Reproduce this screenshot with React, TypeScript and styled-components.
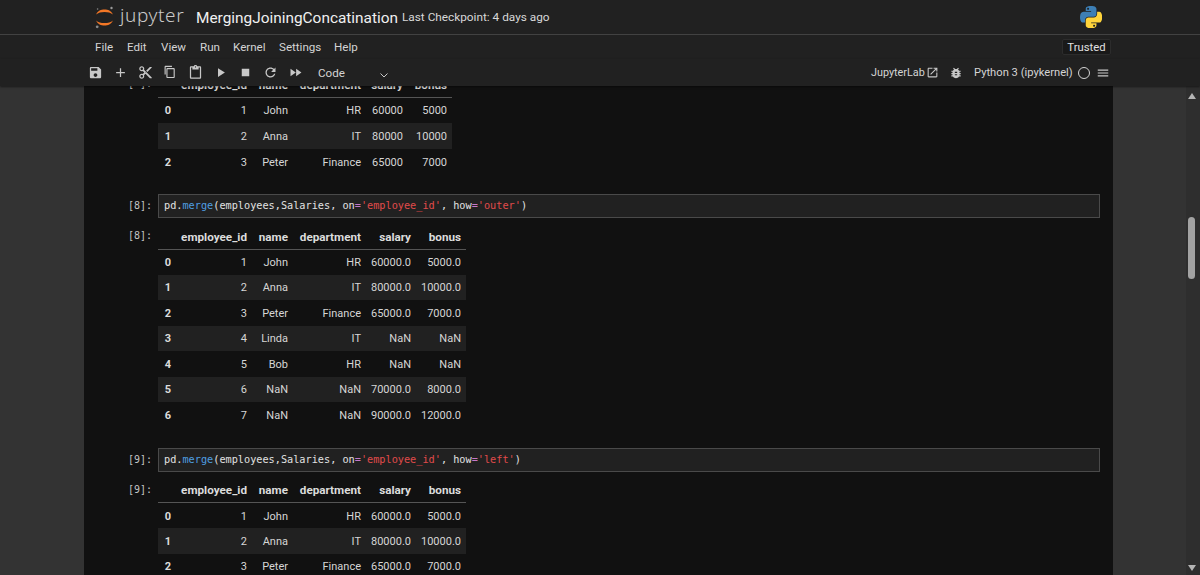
import React from 'react';
import styled, { createGlobalStyle } from 'styled-components';

const Global = createGlobalStyle`
  html, body { margin: 0; padding: 0; height: 100%; background: #333; overflow: hidden; }
  #root { height: 100%; }
`;
const uiFont = `Roboto, "Noto Sans", "Liberation Sans", sans-serif`;
const monoFont = `"DejaVu Sans Mono", "Liberation Mono", monospace`;

const Page = styled.div`
  width: 1200px; height: 575px; display: flex; flex-direction: column;
  overflow: hidden; font-family: ${uiFont}; color: #d8d8d8; position: relative;
`;
const Header = styled.header`
  height: 34px; flex: none; background: #212121; display: flex; align-items: center;
  padding: 0 0 0 95px; border-bottom: 1px solid #424242; box-sizing: content-box;
`;
const Wordmark = styled.span`
  font-family: "Noto Sans", sans-serif; font-weight: 300; font-size: 19px; letter-spacing: .6px;
  color: #c9c9c9; margin-left: 6px; width: 76px; line-height: 30px; margin-top: -4px;
`;
const Title = styled.span`
  font-size: 15.4px; color: #f0f0f0; width: 206px; white-space: nowrap; margin-top: 1px;
`;
const Checkpoint = styled.span`
  font-size: 11.8px; color: #d8d8d8; white-space: nowrap; flex: 1;
`;
const PyLogo = styled.svg`
  width: 22px; height: 22px; margin-right: 98px; margin-top: -1px;
`;
const MenuBar = styled.nav`
  height: 24px; flex: none; background: #212121; display: flex; align-items: center;
  padding-left: 95px;
`;
const MenuItem = styled.span<{ $w: number }>`
  font-size: 11.6px; color: #d4d4d4; width: ${p => p.$w}px;
`;
const Trusted = styled.span`
  margin-left: auto; margin-right: 89px; height: 16px; width: 49px; box-sizing: border-box;
  display: flex; align-items: center; justify-content: center; font-size: 11.3px;
  color: #e0e0e0; background: #191919; border: 1px solid #2c2c2c; border-radius: 2px;
`;
const ToolBar = styled.div`
  height: 27px; flex: none; background: #212121; display: flex; align-items: center;
  padding-left: 83px; box-shadow: 0 1px 2px rgba(0,0,0,.5); position: relative; z-index: 2;
`;
const ToolSlot = styled.span`
  width: 25px; height: 27px; flex: none; display: flex; align-items: center; justify-content: center;
`;
const Icon = styled.svg<{ $s?: number }>`
  width: ${p => p.$s ?? 15}px; height: ${p => p.$s ?? 15}px; fill: #c8c8c8; flex: none;
`;
const CellType = styled.span`
  font-size: 11.6px; color: #d4d4d4; margin-left: 10px; width: 60px;
`;
const Chevron = styled.svg`
  width: 12px; height: 12px; fill: none; stroke: #c8c8c8; stroke-width: 2; margin-top: 4px;
`;
const ToolRight = styled.div`
  margin-left: auto; margin-right: 90px; display: flex; align-items: center; font-size: 11.2px; color: #d4d4d4;
`;
const LabLabel = styled.span` width: 55px; white-space: nowrap; font-size: 10.8px; `;
const BugSlot = styled.span` margin-left: 10px; width: 25px; display: flex; `;
const KernelLabel = styled.span` width: 104px; white-space: nowrap; `;
const KernelDot = styled.span`
  width: 12px; height: 12px; border: 1px solid #d4d4d4; border-radius: 50%; margin-right: 6px; box-sizing: border-box;
`;
const Body = styled.main`
  flex: 1; min-height: 0; display: flex; background: #333; padding-left: 84px;
`;
const Notebook = styled.section`
  width: 1029px; flex: none; background: #111; overflow: hidden;
`;
const Scroller = styled.div`
  margin-top: -20px; padding-left: 46px; padding-right: 13px; display: flex; flex-direction: column;
`;
const Cell = styled.div`
  display: grid; grid-template-columns: 28px 1fr;
`;
const Prompt = styled.span`
  font-family: ${monoFont}; font-size: 10px; color: #c4c4c4; line-height: 24px; margin-left: -2px;
`;
const Input = styled.div`
  grid-column: 2; height: 24px; box-sizing: border-box; border: 1px solid #4a4a4a; background: #212121;
  padding-left: 5px; line-height: 22px; font-family: ${monoFont};
  font-size: 10.23px; color: #e2e2e2; white-space: pre;
`;
const Fn = styled.span` color: #4f9ee0; `;
const Op = styled.span` color: #c678c8; `;
const Str = styled.span` color: #e04b4b; `;
const OutputRow = styled(Cell)<{ $after?: number }>`
  margin-top: 6px; margin-bottom: ${p => p.$after ?? 20}px;
`;
const Frame = styled.table`
  border-collapse: collapse; table-layout: fixed; font-size: 11px; color: #d6d6d6;
`;
const HeadCell = styled.th`
  height: 25px; padding: 1px 5px 0; text-align: right; font-weight: 700; font-size: 11.7px; color: #dcdcdc;
  border-bottom: 1px solid #555; white-space: nowrap; box-sizing: border-box;
`;
const Row = styled.tr<{ $odd: boolean; $h: number }>`
  height: ${p => p.$h}px; background: ${p => (p.$odd ? '#212121' : 'transparent')};
`;
const IndexCell = styled.th<{ $nudge: number }>`
  padding: ${p => p.$nudge}px 5px 0; text-align: right; font-weight: 700; color: #dcdcdc; box-sizing: border-box;
`;
const DataCell = styled.td<{ $nudge: number }>`
  padding: ${p => p.$nudge}px 5px 0; text-align: right; white-space: nowrap; box-sizing: border-box;
`;
const ScrollTrack = styled.div`
  position: absolute; right: 0; top: 86px; bottom: 0; width: 14px; background: #2e2e2e;
`;
const Thumb = styled.div`
  position: absolute; left: 2px; top: 131px; width: 7px; height: 62px; border-radius: 4px; background: #a3a3a3;
`;
const ArrowUp = styled.div`
  position: absolute; left: 2px; top: 7px; width: 0; height: 0;
  border-left: 4px solid transparent; border-right: 4px solid transparent; border-bottom: 6px solid #b4b4b4;
`;
const ArrowDown = styled.div`
  position: absolute; left: 2px; bottom: 4px; width: 0; height: 0;
  border-left: 4px solid transparent; border-right: 4px solid transparent; border-top: 6px solid #b4b4b4;
`;

const P = {
  save: 'M17 3H5c-1.11 0-2 .9-2 2v14c0 1.1.89 2 2 2h14c1.1 0 2-.9 2-2V7l-4-4zm-5 16c-1.66 0-3-1.34-3-3s1.34-3 3-3 3 1.34 3 3-1.34 3-3 3zm3-10H5V5h10v4z',
  add: 'M19 13h-6v6h-2v-6H5v-2h6V5h2v6h6v2z',
  cut: 'M9.64 7.64c.23-.5.36-1.05.36-1.64 0-2.21-1.79-4-4-4S2 3.79 2 6s1.79 4 4 4c.59 0 1.14-.13 1.64-.36L10 12l-2.36 2.36C7.14 14.13 6.59 14 6 14c-2.21 0-4 1.79-4 4s1.79 4 4 4 4-1.79 4-4c0-.59-.13-1.14-.36-1.64L12 14l7 7h3v-1L9.64 7.64zM6 8c-1.1 0-2-.89-2-2s.9-2 2-2 2 .89 2 2-.9 2-2 2zm0 12c-1.1 0-2-.89-2-2s.9-2 2-2 2 .89 2 2-.9 2-2 2zm6-7.5c-.28 0-.5-.22-.5-.5s.22-.5.5-.5.5.22.5.5-.22.5-.5.5zM19 3l-6 6 2 2 7-7V3z',
  copy: 'M14.3 1.3H4.3c-1 0-1.8.8-1.8 1.8v12.2h1.8V3.1h10V1.3zM17 4.9H7.2c-1 0-1.8.8-1.8 1.8v12.4c0 1 .8 1.8 1.8 1.8H17c1 0 1.8-.8 1.8-1.8V6.7c0-1-.8-1.8-1.8-1.8zm0 14.2H7.2V6.7H17v12.4z',
  paste: 'M19 2h-4.18C14.4.84 13.3 0 12 0c-1.3 0-2.4.84-2.82 2H5c-1.1 0-2 .9-2 2v16c0 1.1.9 2 2 2h14c1.1 0 2-.9 2-2V4c0-1.1-.9-2-2-2zm-7 0c.55 0 1 .45 1 1s-.45 1-1 1-1-.45-1-1 .45-1 1-1zm7 18H5V4h2v3h10V4h2v16z',
  run: 'M8 5v14l11-7z',
  stop: 'M6 6h12v12H6z',
  restart: 'M17.65 6.35C16.2 4.9 14.21 4 12 4c-4.42 0-7.99 3.58-7.99 8s3.57 8 7.99 8c3.73 0 6.84-2.55 7.73-6h-2.08c-.82 2.33-3.04 4-5.65 4-3.31 0-6-2.69-6-6s2.69-6 6-6c1.66 0 3.14.69 4.22 1.78L13 11h7V4l-2.35 2.35z',
  ff: 'M4 18l8.5-6L4 6v12zm9-12v12l8.5-6L13 6z',
  launch: 'M19 19H5V5h7V3H5c-1.11 0-2 .9-2 2v14c0 1.1.89 2 2 2h14c1.1 0 2-.9 2-2v-7h-2v7zM14 3v2h3.59l-9.83 9.83 1.41 1.41L19 6.41V10h2V3h-7z',
  bug: 'M20 8h-2.81c-.45-.78-1.07-1.45-1.82-1.96L17 4.41 15.59 3l-2.17 2.17C12.96 5.06 12.49 5 12 5c-.49 0-.96.06-1.41.17L8.41 3 7 4.41l1.62 1.63C7.88 6.55 7.26 7.22 6.81 8H4v2h2.09c-.05.33-.09.66-.09 1v1H4v2h2v1c0 .34.04.67.09 1H4v2h2.81c1.04 1.79 2.97 3 5.19 3s4.15-1.21 5.19-3H20v-2h-2.09c.05-.33.09-.66.09-1v-1h2v-2h-2v-1c0-.34-.04-.67-.09-1H20V8zm-6 8h-4v-2h4v2zm0-4h-4v-2h4v2z',
  menu: 'M3 18h18v-2H3v2zm0-5h18v-2H3v2zm0-7v2h18V6H3z',
};
const Glyph = ({ d, s }: { d: string; s?: number }) => (
  <Icon $s={s} viewBox="0 0 24 24"><path d={d} /></Icon>
);

const JupyterMark = () => (
  <svg width="19" height="24" viewBox="0 0 19 24" style={{ flex: 'none' }}>
    <path d="M1 9.6C3 5.6 6 4.6 9.5 4.6S16 5.6 18 9.6C15.8 7.7 13 7 9.5 7S3.2 7.7 1 9.6z" fill="#f37726" />
    <path d="M1 15.4C3 19.4 6 20.4 9.5 20.4S16 19.4 18 15.4C15.8 17.3 13 18 9.5 18S3.2 17.3 1 15.4z" fill="#f37726" />
    <circle cx="16.5" cy="3" r="1.2" fill="#9a9a9a" />
    <circle cx="2.2" cy="21.8" r="1.4" fill="#8a8a8a" />
    <circle cx="2.6" cy="4" r=".8" fill="#8a8a8a" />
  </svg>
);

const menuItems: [string, number][] = [['File', 32], ['Edit', 34], ['View', 39], ['Run', 33], ['Kernel', 46], ['Settings', 55], ['Help', 40]];
const tools = [P.save, P.add, P.cut, P.copy, P.paste, P.run, P.stop, P.restart, P.ff];

type RowData = (string | number)[];
const intRows: RowData[] = [
  [1, 'John', 'HR', 60000, 5000],
  [2, 'Anna', 'IT', 80000, 10000],
  [3, 'Peter', 'Finance', 65000, 7000],
];
const outerRows: RowData[] = [
  [1, 'John', 'HR', '60000.0', '5000.0'],
  [2, 'Anna', 'IT', '80000.0', '10000.0'],
  [3, 'Peter', 'Finance', '65000.0', '7000.0'],
  [4, 'Linda', 'IT', 'NaN', 'NaN'],
  [5, 'Bob', 'HR', 'NaN', 'NaN'],
  [6, 'NaN', 'NaN', '70000.0', '8000.0'],
  [7, 'NaN', 'NaN', '90000.0', '12000.0'],
];
const heads = ['employee_id', 'name', 'department', 'salary', 'bonus'];
const wideCols = [18, 76, 41, 73, 50, 50];
const narrowCols = [18, 76, 41, 73, 42, 44];

const DataFrame = ({ rows, cols, rowH = 25.5, nudge = 1 }: { rows: RowData[]; cols: number[]; rowH?: number; nudge?: number }) => (
  <Frame style={{ width: cols.reduce((a, b) => a + b, 0) }}>
    <colgroup>{cols.map((w, i) => <col key={i} width={w} />)}</colgroup>
    <thead>
      <tr>
        <HeadCell />
        {heads.map(h => <HeadCell key={h}>{h}</HeadCell>)}
      </tr>
    </thead>
    <tbody>
      {rows.map((r, i) => (
        <Row key={i} $odd={i % 2 === 1} $h={rowH}>
          <IndexCell $nudge={nudge}>{i}</IndexCell>
          {r.map((v, j) => <DataCell key={j} $nudge={nudge}>{v}</DataCell>)}
        </Row>
      ))}
    </tbody>
  </Frame>
);

const Code = ({ how }: { how: string }) => (
  <Input>
    pd.<Fn>merge</Fn>(employees,Salaries, on<Op>=</Op><Str>'employee_id'</Str>, how<Op>=</Op><Str>'{how}'</Str>)
  </Input>
);

export default function App() {
  return (
    <Page>
      <Global />
      <Header>
        <JupyterMark />
        <Wordmark>jupyter</Wordmark>
        <Title>MergingJoiningConcatination</Title>
        <Checkpoint>Last Checkpoint: 4 days ago</Checkpoint>
        <PyLogo viewBox="0 0 110 110">
          <path fill="#3d7fb5" d="M54.919 0C50.335.021 45.958.412 42.106 1.094 30.76 3.098 28.7 7.295 28.7 15.032v10.219h26.813v3.406H18.638c-7.793 0-14.616 4.684-16.75 13.594-2.462 10.213-2.571 16.586 0 27.25 1.905 7.938 6.457 13.594 14.25 13.594h9.219V70.844c0-8.85 7.657-16.656 16.75-16.656h26.781c7.454 0 13.406-6.138 13.406-13.625V15.032c0-7.266-6.13-12.725-13.406-13.937C64.282.328 59.502-.02 54.919 0zM40.419 8.219c2.77 0 5.031 2.299 5.031 5.125 0 2.816-2.262 5.094-5.031 5.094-2.78 0-5.031-2.278-5.031-5.094 0-2.826 2.252-5.125 5.031-5.125z" />
          <path fill="#ffd43b" d="M85.638 28.657v11.906c0 9.231-7.826 17-16.75 17H42.106c-7.336 0-13.406 6.278-13.406 13.625v25.531c0 7.266 6.319 11.54 13.406 13.625 8.487 2.496 16.626 2.947 26.781 0 6.75-1.954 13.406-5.888 13.406-13.625V86.501H55.513v-3.406h40.188c7.793 0 10.696-5.436 13.406-13.594 2.8-8.399 2.68-16.476 0-27.25-1.926-7.757-5.604-13.594-13.406-13.594zM70.575 93.313c2.78 0 5.031 2.278 5.031 5.094 0 2.826-2.252 5.125-5.031 5.125-2.77 0-5.031-2.299-5.031-5.125 0-2.816 2.262-5.094 5.031-5.094z" />
        </PyLogo>
      </Header>
      <MenuBar>
        {menuItems.map(([t, w]) => <MenuItem key={t} $w={w}>{t}</MenuItem>)}
        <Trusted>Trusted</Trusted>
      </MenuBar>
      <ToolBar>
        {tools.map((d, i) => <ToolSlot key={i}><Glyph d={d} /></ToolSlot>)}
        <CellType>Code</CellType>
        <Chevron viewBox="0 0 24 24"><path d="M5 9l7 7 7-7" /></Chevron>
        <ToolRight>
          <LabLabel>JupyterLab</LabLabel>
          <Glyph d={P.launch} s={13} />
          <BugSlot><Glyph d={P.bug} s={14} /></BugSlot>
          <KernelLabel>Python 3 (ipykernel)</KernelLabel>
          <KernelDot />
          <Glyph d={P.menu} s={14} />
        </ToolRight>
      </ToolBar>
      <Body>
        <Notebook>
          <Scroller>
            <OutputRow $after={19}>
              <Prompt>[ ]:</Prompt>
              <DataFrame rows={intRows} cols={narrowCols} rowH={26} nudge={0} />
            </OutputRow>
            <Cell>
              <Prompt>[8]:</Prompt>
              <Code how="outer" />
            </Cell>
            <OutputRow>
              <Prompt>[8]:</Prompt>
              <DataFrame rows={outerRows} cols={wideCols} />
            </OutputRow>
            <Cell>
              <Prompt>[9]:</Prompt>
              <Code how="left" />
            </Cell>
            <OutputRow>
              <Prompt>[9]:</Prompt>
              <DataFrame rows={outerRows.slice(0, 4)} cols={wideCols} />
            </OutputRow>
          </Scroller>
        </Notebook>
      </Body>
      <ScrollTrack>
        <ArrowUp />
        <Thumb />
        <ArrowDown />
      </ScrollTrack>
    </Page>
  );
}
